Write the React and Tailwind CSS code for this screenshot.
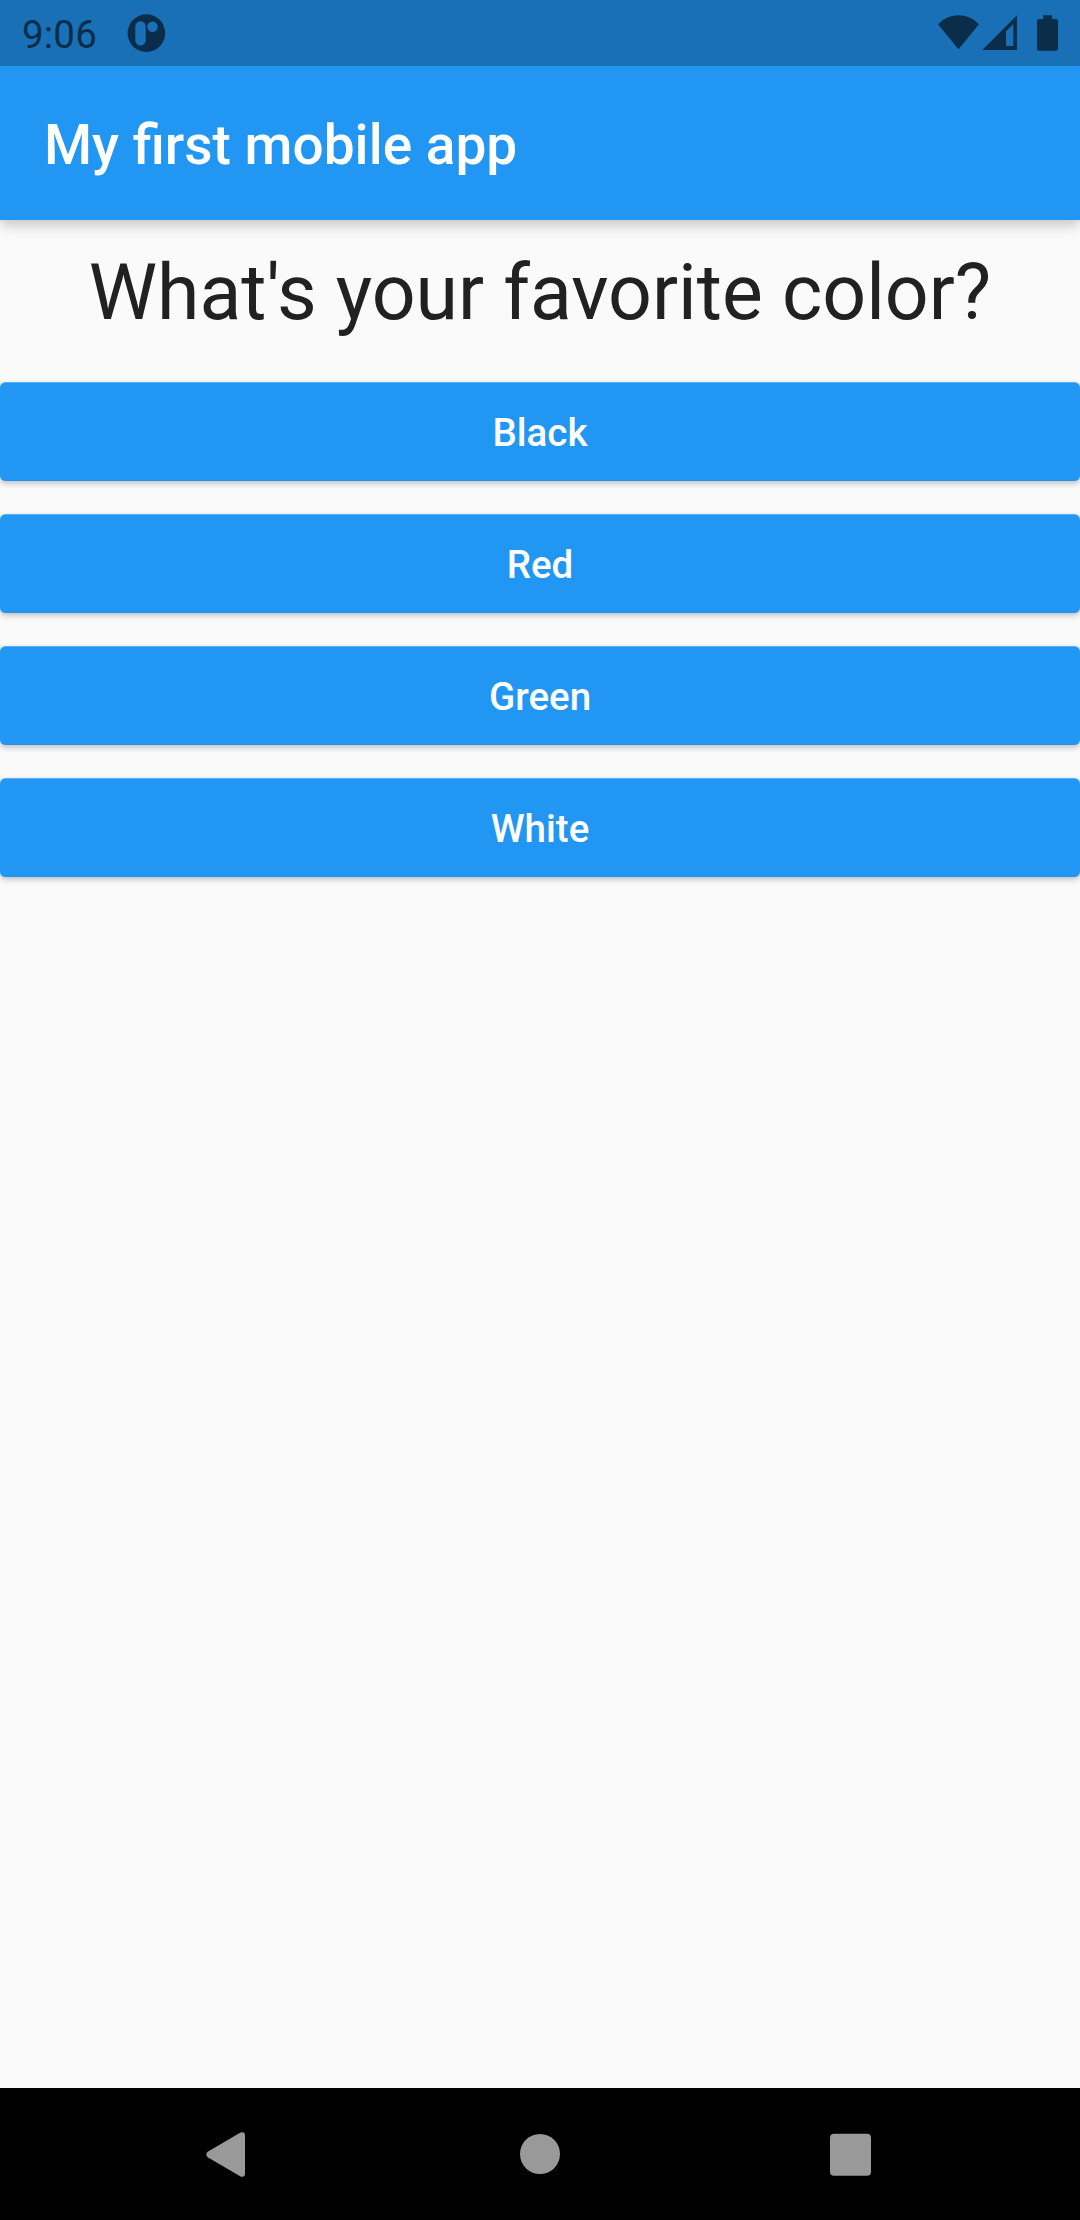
const OPTIONS = ["Black", "Red", "Green", "White"];

function StatusBar() {
  return (
    <div className="relative z-10 flex h-[66px] shrink-0 items-center bg-[#1970b6] text-[#0a2d49]">
      <span className="ml-[22px] w-[105px] pt-[3px] text-[38.5px] leading-[63px] tracking-[0.2px]">9:06</span>
      <svg className="h-[66px] w-[40px]" viewBox="127 0 40 66" fill="currentColor">
        <path
          fillRule="evenodd"
          d="M146.4 14.3a18.8 18.8 0 1 0 0 37.6a18.8 18.8 0 1 0 0-37.6ZM140.5 21.2a5.2 5.2 0 0 1 5.2 5.2v14a5.2 5.2 0 0 1-10.4 0v-14a5.2 5.2 0 0 1 5.2-5.2ZM152.5 21.5a5.2 5.2 0 1 1 0 10.4a5.2 5.2 0 1 1 0-10.4Z"
        />
      </svg>
      <svg className="ml-auto h-[66px] w-[160px]" viewBox="0 0 160 66" fill="currentColor">
        <path d="M38.5 49.3L18 24.2C24 18.5 31 15.3 38.5 15.3S53 18.5 59 24.2Z" />
        <path fillRule="evenodd" d="M62.3 50L97 15.3V50ZM86 46H93.3V24L86 31.3Z" />
        <path d="M123.2 15.2h8.8v3.9h3.7a2.3 2.3 0 0 1 2.3 2.3v27a2.3 2.3 0 0 1-2.3 2.3h-16.4a2.3 2.3 0 0 1-2.3-2.3v-27a2.3 2.3 0 0 1 2.3-2.3h3.9Z" />
      </svg>
    </div>
  );
}

function AppBar() {
  return (
    <header className="flex h-[154px] shrink-0 items-center bg-[#2196f3] px-[44px] shadow-[0_6px_14px_rgba(0,0,0,0.15),0_3px_9px_rgba(0,0,0,0.08)]">
      <h1 className="pt-[4px] text-[55px] leading-[64px] font-medium whitespace-nowrap text-white">My first mobile app</h1>
    </header>
  );
}

function AnswerButton({ label }) {
  return (
    <button className="h-[99px] w-full shrink-0 rounded-[5.5px] bg-[#2196f3] pt-[2px] text-center text-[38.5px] leading-[97px] font-medium text-white shadow-[inset_0_1px_0_rgba(255,255,255,0.25),0_3px_6px_rgba(0,0,0,0.18),0_1px_4px_rgba(0,0,0,0.08)]">
      {label}
    </button>
  );
}

function NavigationBar() {
  return (
    <nav className="grid h-[132px] shrink-0 grid-cols-[450px_180px_450px] items-center bg-black text-[#999999]">
      <svg className="ml-[206px] h-[132px] w-[40px]" viewBox="206 0 40 132" fill="currentColor">
        <path d="M207.7 63.7L240.5 44.6Q244.8 43 245 47.5V85.5Q244.8 90 240.5 88.4L207.7 69.3Q205 66.5 207.7 63.7Z" />
      </svg>
      <div className="mx-auto size-[40px] rounded-full bg-[#999999]" />
      <div className="ml-[200px] size-[41.25px] translate-y-[0.7px] rounded-[4px] bg-[#999999]" />
    </nav>
  );
}

export default function App() {
  return (
    <div className="flex h-[2220px] w-[1080px] flex-col overflow-hidden bg-[#fafafa] font-[Roboto,sans-serif]">
      <StatusBar />
      <AppBar />
      <main className="flex grow flex-col">
        <h2 className="mt-[28px] mb-[44px] text-center text-[77px] leading-[90px] whitespace-nowrap text-[#212121]">
          What's your favorite color?
        </h2>
        <div className="flex flex-col gap-[33px]">
          {OPTIONS.map((label) => (
            <AnswerButton key={label} label={label} />
          ))}
        </div>
      </main>
      <NavigationBar />
    </div>
  );
}
